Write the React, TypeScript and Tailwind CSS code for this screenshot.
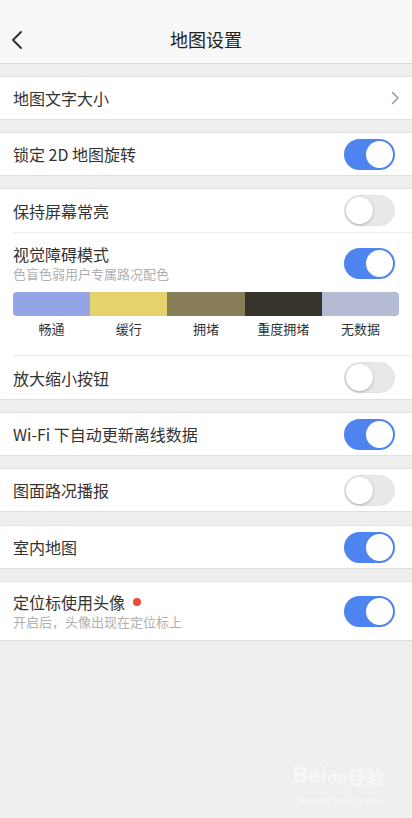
import React from 'react';

const FONT = '"PingFang SC", "Noto Sans CJK SC", "Noto Sans", sans-serif';

const Toggle: React.FC<{ on: boolean }> = ({ on }) =>
  on ? (
    <div className="w-[51px] h-[31px] rounded-full bg-[#4d84f0] relative shrink-0">
      <div className="absolute right-[2px] top-[2px] w-[27px] h-[27px] rounded-full bg-white" />
    </div>
  ) : (
    <div className="w-[51px] h-[31px] rounded-full bg-[#e8e8e8] border border-[#e2e2e2] relative shrink-0">
      <div className="absolute left-[1px] top-[1px] w-[27px] h-[27px] rounded-full bg-white shadow-[0_1px_3px_rgba(0,0,0,0.25)]" />
    </div>
  );

const Row: React.FC<{ label: string; on: boolean; h?: string }> = ({ label, on, h = 'h-[42px]' }) => (
  <div className={`${h} flex items-center justify-between pl-[13px] pr-[17px]`}>
    <span className="text-[16px] text-[#333]">{label}</span>
    <Toggle on={on} />
  </div>
);

const Section: React.FC<{ children: React.ReactNode; gap?: string }> = ({ children, gap = 'mt-3' }) => (
  <div className={`${gap} bg-white border-y border-[#e0e0e0]`}>{children}</div>
);

const Divider = () => (
  <div className="pl-[13px]">
    <div className="h-px bg-[#ececec]" />
  </div>
);

const traffic = [
  { label: '畅通', color: 'bg-[#94a4e6]' },
  { label: '缓行', color: 'bg-[#e4d36c]' },
  { label: '拥堵', color: 'bg-[#877d58]' },
  { label: '重度拥堵', color: 'bg-[#37342e]' },
  { label: '无数据', color: 'bg-[#b5bbd3]' },
];

const App: React.FC = () => {
  return (
    <div className="min-h-screen bg-[#efefef] relative overflow-hidden" style={{ fontFamily: FONT }}>
      {/* Header */}
      <div className="h-[64px] bg-[#f8f8f8] border-b border-[#d8d8d8] flex items-center justify-center relative">
        <svg className="absolute left-[10px] top-[30px]" width="14" height="20" viewBox="0 0 14 20" fill="none">
          <path d="M11 2 L3 10 L11 18" stroke="#333" strokeWidth="2" strokeLinecap="round" strokeLinejoin="round" />
        </svg>
        <h1 className="text-[18px] text-[#222] pt-[16px]">地图设置</h1>
      </div>

      <Section>
        <div className="h-[42px] flex items-center justify-between pl-[13px] pr-[12px]">
          <span className="text-[16px] text-[#333]">地图文字大小</span>
          <svg width="9" height="14" viewBox="0 0 9 14" fill="none">
            <path d="M1.5 1.5 L7 7 L1.5 12.5" stroke="#999" strokeWidth="1.5" strokeLinecap="round" strokeLinejoin="round" />
          </svg>
        </div>
      </Section>

      <Section>
        <Row label="锁定 2D 地图旋转" on />
      </Section>

      <Section>
        <Row label="保持屏幕常亮" on={false} h="h-[43px]" />
        <Divider />
        <div className="pl-[13px] pr-[13px] pt-[10px] pb-[18px]">
          <div className="flex items-center justify-between pr-[4px]">
            <div>
              <div className="text-[16px] leading-[22px] text-[#333]">视觉障碍模式</div>
              <div className="text-[13px] leading-[18px] text-[#b0b0b0]">色盲色弱用户专属路况配色</div>
            </div>
            <Toggle on />
          </div>
          <div className="mt-[9px] h-[24px] rounded-[4px] overflow-hidden flex">
            {traffic.map((t) => (
              <div key={t.label} className={`flex-1 ${t.color}`} />
            ))}
          </div>
          <div className="mt-[5px] flex">
            {traffic.map((t) => (
              <div key={t.label} className="flex-1 text-center text-[13px] leading-[16px] text-[#333]">
                {t.label}
              </div>
            ))}
          </div>
        </div>
        <Divider />
        <Row label="放大缩小按钮" on={false} h="h-[43px]" />
      </Section>

      <Section>
        <Row label="Wi-Fi 下自动更新离线数据" on />
      </Section>

      <Section>
        <Row label="图面路况播报" on={false} />
      </Section>

      <Section gap="mt-[13px]">
        <Row label="室内地图" on />
      </Section>

      <Section>
        <div className="h-[58px] flex items-center justify-between pl-[13px] pr-[17px]">
          <div>
            <div className="flex items-center text-[16px] leading-[22px] text-[#333]">
              定位标使用头像
              <span className="ml-[8px] w-[8px] h-[8px] rounded-full bg-[#ee4a3a]" />
            </div>
            <div className="text-[13px] leading-[18px] text-[#b0b0b0]">开启后，头像出现在定位标上</div>
          </div>
          <Toggle on />
        </div>
      </Section>

      {/* watermark */}
      <div className="absolute right-[28px] bottom-[10px] flex flex-col items-center text-[#f7f7f7] pointer-events-none">
        <div className="flex items-end text-[22px] font-bold leading-none" style={{ fontFamily: '"Liberation Sans", sans-serif' }}>
          Bai
          <span className="text-[16px] mx-[1px]">du</span>
          <span className="text-[18px]" style={{ fontFamily: FONT }}>经验</span>
        </div>
        <div className="text-[11px] mt-[6px]" style={{ fontFamily: '"Liberation Serif", serif' }}>jingyan.baidu.com</div>
      </div>
    </div>
  );
};

export default App;
